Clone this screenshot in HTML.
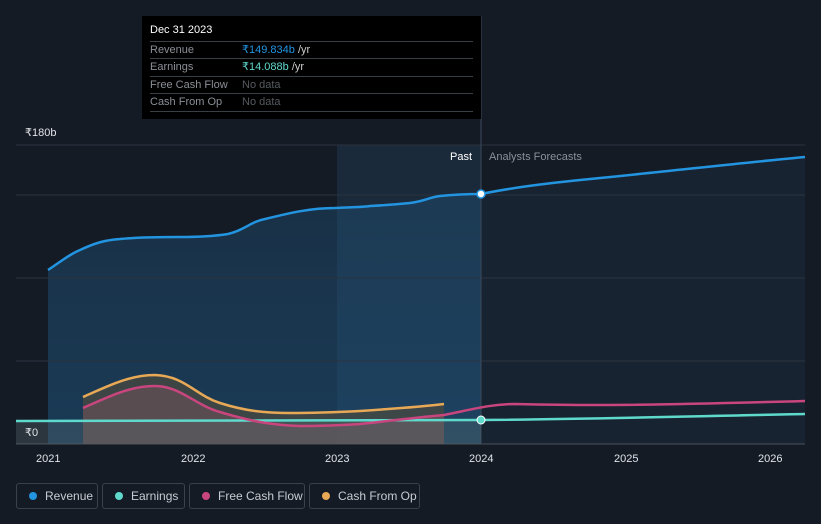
<!DOCTYPE html>
<html><head><meta charset="utf-8"><style>
body{margin:0;width:821px;height:524px;background:#151b25;font-family:"Liberation Sans","Noto Sans CJK SC",sans-serif;overflow:hidden;position:relative}
.tt{position:absolute;left:142px;top:16px;width:339px;height:103px;background:#000;color:#fff;font-size:11px}
.tt .r{position:absolute;left:8px;right:8px;height:17px;border-top:1px solid #3a3f46;line-height:17px;color:#8a8f96}
.tt .r span{position:absolute;left:92px}
.leg{position:absolute;top:483px;height:26px;border:1px solid #3a414b;border-radius:3px;color:#c8ccd2;font-size:12px;line-height:25px;box-sizing:border-box}
.leg i{position:absolute;left:12px;top:8px;width:8px;height:8px;border-radius:50%}
.leg b{font-weight:normal;position:absolute;left:28px}
</style></head><body>
<svg width="821" height="524" style="position:absolute;left:0;top:0">
<defs>
<linearGradient id="g" x1="0" y1="0" x2="0" y2="1"><stop offset="0" stop-color="#1f5680" stop-opacity=".6"/><stop offset="1" stop-color="#1f5680" stop-opacity=".9"/></linearGradient>
</defs>
<rect x="337" y="145" width="144" height="299" fill="#1b2a3a"/>
<path d="M48,270 C60,262 70,254 80,250 C95,243 105,240 120,239 C140,237 160,237 180,237 C200,237 215,236 228,234 C245,230 250,222 265,219 C290,213 310,208 335,208 C355,207 365,207 370,206 C390,205 400,204 410,203 C425,201 430,197 440,196 C460,194 470,194 481,194 L481,444 L48,444Z" fill="url(#g)" opacity=".6"/>
<path d="M481,194 C520,186 560,182 600,178 C680,170 740,163 805,157 L805,444 L481,444Z" fill="#1a2a3a" opacity=".6"/>
<g stroke="#2b333e" stroke-width="1"><line x1="16" y1="145" x2="805" y2="145"/><line x1="16" y1="195" x2="805" y2="195"/><line x1="16" y1="278" x2="805" y2="278"/><line x1="16" y1="361" x2="805" y2="361"/><line x1="16" y1="444" x2="805" y2="444" stroke="#4a525c"/></g>
<line x1="481" y1="16" x2="481" y2="444" stroke="#3a4a5c"/>
<path d="M83,397 C110,385 130,375 155,375 C185,376 195,395 220,403 C245,411 265,413 290,413 C320,413 340,412 360,411 C390,409 420,407 444,404 L444,444 L83,444Z" fill="#4a4a40" opacity=".75"/>
<path d="M83,408 C110,396 130,386 155,386 C180,386 195,405 220,412 C250,421 270,425 300,426 C330,426 345,425 360,424 C390,421 420,417 444,415 L444,444 L83,444Z" fill="#7a5560" opacity=".45"/>
<path d="M16,421 L481,421 L481,444 L16,444Z" fill="#5a6a70" opacity=".35"/>
<path d="M16,421 L481,420" stroke="#5fd9cc" stroke-width="2.5" fill="none"/>
<path d="M481,420 C600,419 700,416 805,414" stroke="#5fd9cc" stroke-width="2.5" fill="none"/>
<path d="M83,408 C110,396 130,386 155,386 C180,386 195,405 220,412 C250,421 270,425 300,426 C330,426 345,425 360,424 C390,421 420,417 444,415 C470,410 490,404 515,404 C560,405 580,405 600,405 C650,405 700,404 805,401" stroke="#c9457e" stroke-width="2.5" fill="none"/>
<path d="M83,397 C110,385 130,375 155,375 C185,376 195,395 220,403 C245,411 265,413 290,413 C320,413 340,412 360,411 C390,409 420,407 444,404" stroke="#e8a957" stroke-width="2.5" fill="none"/>
<path d="M48,270 C60,262 70,254 80,250 C95,243 105,240 120,239 C140,237 160,237 180,237 C200,237 215,236 228,234 C245,230 250,222 265,219 C290,213 310,208 335,208 C355,207 365,207 370,206 C390,205 400,204 410,203 C425,201 430,197 440,196 C460,194 470,194 481,194 C520,186 560,182 600,178 C680,170 740,163 805,157" stroke="#2394e0" stroke-width="2.5" fill="none"/>
<circle cx="481" cy="194" r="4" fill="#fff" stroke="#2394e0" stroke-width="1.5"/>
<circle cx="481" cy="420" r="4" fill="#5fd9cc" stroke="#fff" stroke-width="1"/>
<g font-size="11" fill="#e0e3e7"><text x="25" y="136">₹180b</text><text x="25" y="436">₹0</text>
<text x="36" y="462">2021</text><text x="181" y="462">2022</text><text x="325" y="462">2023</text><text x="469" y="462">2024</text><text x="614" y="462">2025</text><text x="758" y="462">2026</text>
<text x="450" y="160" fill="#fff">Past</text><text x="489" y="160" fill="#8a9099">Analysts Forecasts</text></g>
</svg>
<div class="tt">
<div style="position:absolute;left:8px;top:8px;font-size:11px">Dec 31 2023</div>
<div class="r" style="top:25px">Revenue<span style="color:#2394e0">₹149.834b <span style="position:static;color:#ccc">/yr</span></span></div>
<div class="r" style="top:42px">Earnings<span style="color:#5fd9cc">₹14.088b <span style="position:static;color:#ccc">/yr</span></span></div>
<div class="r" style="top:60px">Free Cash Flow<span style="color:#555a60">No data</span></div>
<div class="r" style="top:77px;border-bottom:1px solid #3a3f46">Cash From Op<span style="color:#555a60">No data</span></div>
</div>
<div class="leg" style="left:16px;width:82px"><i style="background:#2394e0"></i><b>Revenue</b></div>
<div class="leg" style="left:102px;width:83px"><i style="background:#5fd9cc"></i><b>Earnings</b></div>
<div class="leg" style="left:189px;width:116px"><i style="background:#c9457e"></i><b>Free Cash Flow</b></div>
<div class="leg" style="left:309px;width:111px"><i style="background:#e8a957"></i><b>Cash From Op</b></div>
</body></html>
